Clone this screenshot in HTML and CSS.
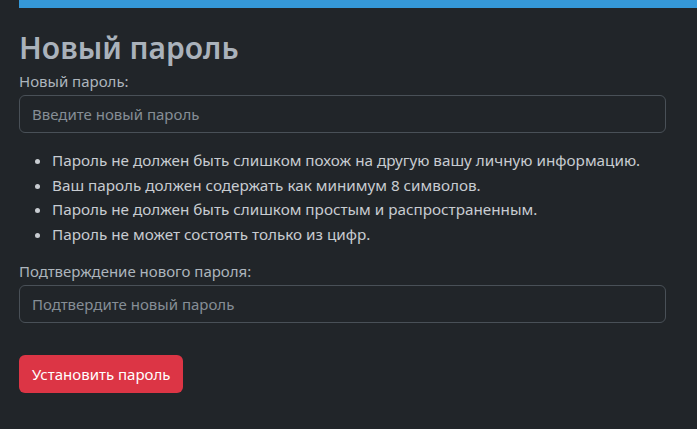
FILE: index.html
```html
<!DOCTYPE html>
<html lang="ru">
<head>
<meta charset="utf-8">
<title>Новый пароль</title>
<link rel="stylesheet" href="styles.css">
</head>
<body>
<div class="topbar"></div>
<main class="page">
  <h1 class="title">Новый пароль</h1>
  <form class="form">
    <div class="field">
      <label class="label" for="p1">Новый пароль:</label>
      <input class="input" id="p1" type="password" placeholder="Введите новый пароль">
    </div>
    <ul class="hints">
      <li>Пароль не должен быть слишком похож на другую вашу личную информацию.</li>
      <li>Ваш пароль должен содержать как минимум 8 символов.</li>
      <li>Пароль не должен быть слишком простым и распространенным.</li>
      <li>Пароль не может состоять только из цифр.</li>
    </ul>
    <div class="field">
      <label class="label" for="p2">Подтверждение нового пароля:</label>
      <input class="input" id="p2" type="password" placeholder="Подтвердите новый пароль">
    </div>
    <button class="btn" type="button">Установить пароль</button>
  </form>
</main>
</body>
</html>
```

FILE: styles.css
```css
html, body {
  margin: 0;
  padding: 0;
  background: #212529;
}
body {
  font-family: "Noto Sans", "Open Sans", sans-serif;
  color: #dee2e6;
  font-size: 15px;
}
.topbar {
  margin-left: 19px;
  height: 8px;
  background: #3598d8;
}
.page {
  padding: 0 31px 0 19px;
}
.title {
  margin: 22px 0 5px;
  font-size: 30px;
  line-height: 36px;
  font-weight: 600;
  color: #aab2bb;
}
.form {
  display: flex;
  flex-direction: column;
}
.field {
  display: flex;
  flex-direction: column;
  gap: 4px;
}
.label {
  font-size: 15px;
  line-height: 20px;
  color: #adb5bd;
}
.input {
  box-sizing: border-box;
  height: 38px;
  padding: 0 12px;
  border: 1px solid #495057;
  border-radius: 6px;
  background: #212529;
  color: #dee2e6;
  font-family: inherit;
  font-size: 15px;
  outline: none;
}
.input::placeholder {
  color: #868e96;
}
.hints {
  margin: 15px 0 15px;
  padding-left: 33px;
  color: #c8ccd1;
  font-size: 15.25px;
  line-height: 24.6px;
}
.btn {
  align-self: flex-start;
  margin-top: 32px;
  height: 38px;
  padding: 0 13px;
  border: none;
  border-radius: 6px;
  background: #dc3545;
  color: #fff;
  font-family: inherit;
  font-size: 15px;
}
```
